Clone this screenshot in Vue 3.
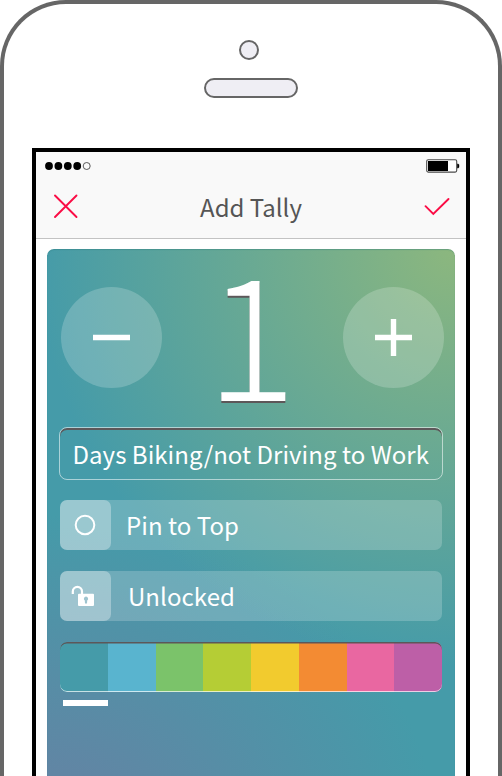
<script setup>
import { ref } from 'vue'

const count = ref(1)
const selected = ref(0)
const colors = ['#459ba9', '#59b4cf', '#7bc36a', '#b5cd35', '#f2cb2e', '#f38b33', '#e967a1', '#bd5fa7']
</script>

<template>
  <div class="phone">
    <div class="camera"></div>
    <div class="speaker"></div>
    <div class="screen">
      <header class="header">
        <div class="status">
          <svg class="signal" width="46" height="8" viewBox="0 0 46 8">
            <circle v-for="n in 4" :key="n" :cx="4 + (n - 1) * 9.4" cy="4" r="3.9" />
            <circle cx="41.7" cy="4" r="3.5" fill="none" stroke="#333" stroke-width=".8" />
          </svg>
          <svg class="battery" width="34" height="14" viewBox="0 0 34 14">
            <rect x=".7" y=".7" width="30" height="12.4" rx="1.5" fill="#fff" stroke="#4a4a4a" stroke-width="1.1" />
            <rect x="2" y="2" width="20" height="10" />
            <path d="M31.2 4.7h1l1 1v2.6l-1 1h-1z" />
          </svg>
        </div>
        <div class="navbar">
          <svg class="close" width="26" height="26" viewBox="0 0 26 26">
            <path d="M2 1.5 23.5 23M23.5 1.5 2 23" />
          </svg>
          <h1 class="title">Add Tally</h1>
          <svg class="check" width="26" height="20" viewBox="0 0 26 20">
            <path d="M1.5 9.2 9.3 17 24.5 2" />
          </svg>
        </div>
      </header>
      <main class="card">
        <div class="counter">
          <button class="round" @click="count--">
            <svg width="37" height="37" viewBox="0 0 37 37"><path d="M0 18.5h37" /></svg>
          </button>
          <div class="count">{{ count }}</div>
          <button class="round" @click="count++">
            <svg width="37" height="37" viewBox="0 0 37 37"><path d="M0 18.5h37M18.5 0v37" /></svg>
          </button>
        </div>
        <div class="field"><span>Days Biking/not Driving to Work</span></div>
        <div class="option pin">
          <div class="tile">
            <svg width="22" height="22" viewBox="0 0 22 22"><circle cx="11" cy="11" r="9.3" fill="none" stroke="#fff" stroke-width="2" /></svg>
          </div>
          <span>Pin to Top</span>
        </div>
        <div class="option lock">
          <div class="tile">
            <svg width="24" height="22" viewBox="0 0 24 22">
              <path d="M1.8 9V6.5a4.6 4.6 0 0 1 9.2 0V9.5" fill="none" stroke="#fff" stroke-width="2.2" />
              <path fill="#fff" fill-rule="evenodd" d="M8 8.7h14q1 0 1 1v10.2q0 1-1 1H8q-1 0-1-1V9.7q0-1 1-1zM15 11.600a2.200 2.200 0 0 0-1.200 4l.2 2.800h2l.2-2.800a2.200 2.200 0 0 0-1.200-4z" />
            </svg>
          </div>
          <span>Unlocked</span>
        </div>
        <div class="swatches">
          <div v-for="(c, i) in colors" :key="c" class="swatch" :style="{ background: c }" @click="selected = i"></div>
        </div>
        <div class="markers">
          <i v-for="(c, i) in colors" :key="c" :class="{ on: i === selected }"></i>
        </div>
      </main>
    </div>
  </div>
</template>

<style>
body {
  background: #fff;
  overflow: hidden;
}
</style>

<style scoped>
* {
  box-sizing: border-box;
}
.phone {
  height: 776px;
  border: 4px solid #666;
  border-bottom: 0;
  border-radius: 66px 66px 0 0;
  display: flex;
  flex-direction: column;
  align-items: center;
  overflow: hidden;
  font-family: "Noto Sans CJK SC", "Noto Sans", sans-serif;
}
.camera {
  flex: none;
  width: 20px;
  height: 20px;
  margin: 36px 0 0 -4px;
  border: 2px solid #666;
  border-radius: 50%;
  background: #efeef4;
}
.speaker {
  flex: none;
  width: 94px;
  height: 20px;
  margin-top: 18px;
  border: 2px solid #666;
  border-radius: 10px;
  background: #efeef4;
}
.screen {
  flex: 1;
  width: 438px;
  margin-top: 50px;
  border: 4px solid #000;
  border-bottom: 0;
  display: flex;
  flex-direction: column;
}
.header {
  height: 87px;
  background: #f9f9f9;
  border-bottom: 1px solid #c3c3c3;
}
.status {
  display: flex;
  justify-content: space-between;
  padding: 7px 6.5px 0 8.5px;
  height: 28px;
}
.signal {
  margin-top: 3px;
}
.navbar {
  display: flex;
  justify-content: space-between;
  align-items: center;
  height: 54px;
  padding: 0 16px 0 17px;
}
.navbar svg {
  fill: none;
  stroke: #fb0c45;
  stroke-width: 1.9;
  stroke-linecap: round;
}
.title {
  margin: 0 1px 0 0;
  font-weight: 400;
  font-size: 24px;
  line-height: 40px;
  color: #555;
}
.card {
  flex: 1;
  margin: 10px 11px 0;
  padding: 0 12px 0 13px;
  border-radius: 7px 7px 0 0;
  box-shadow: inset 0 1px 1px rgba(40, 120, 120, .35);
  background:
    radial-gradient(circle at 100% 0, #8cb77e 0, #8cb77e00 418px),
    radial-gradient(390px 325px at 0 112%, #6880a3 0, #6880a300 100%),
    #459ba9;
  color: #fff;
}
.counter {
  display: flex;
  justify-content: space-between;
  align-items: center;
  height: 176px;
  margin: 0 -1.5px 2px 1px;
}
.round {
  flex: none;
  width: 101px;
  height: 101px;
  padding: 0;
  border: 0;
  border-radius: 50%;
  background: rgba(255, 255, 255, .2);
  display: flex;
  align-items: center;
  justify-content: center;
}
.round svg {
  stroke: #fff;
  stroke-width: 5.4;
}
.count {
  font-weight: 200;
  font-size: 170px;
  line-height: 120px;
  margin: -20px 3px 0 0;
  text-shadow: 0 2px 0 #5d5759;
}
.field {
  height: 53px;
  margin: 0 0 0 -1px;
  border: 1.5px solid rgba(255, 255, 255, .55);
  border-radius: 8px;
  box-shadow: inset 0 2px 0 #5d5759;
  display: flex;
  align-items: center;
  padding: 0 0 1px 12.5px;
  font-size: 24px;
  letter-spacing: .04px;
  white-space: nowrap;
}
.option {
  display: flex;
  align-items: center;
  height: 50px;
  margin: 20px 1px 0 0;
  border-radius: 7px;
  background: rgba(255, 255, 255, .2);
  font-size: 24px;
  letter-spacing: .06px;
  white-space: nowrap;
}
.option.lock {
  margin-top: 21px;
}
.option span {
  margin-top: -1px;
}
.tile {
  width: 51px;
  height: 50px;
  border-radius: 7px;
  background: rgba(255, 255, 255, .32);
  display: flex;
  align-items: center;
  justify-content: center;
  margin-right: 15px;
}
.pin .tile {
  padding-right: 1px;
}
.lock .tile {
  margin-right: 17px;
  padding-right: 6px;
}
.swatches {
  position: relative;
  display: flex;
  height: 50px;
  margin: 21px 1px 0 0;
  border-radius: 7px;
  overflow: hidden;
}
.swatches::after {
  content: "";
  position: absolute;
  inset: 0;
  border-radius: 7px;
  box-shadow: inset 0 1.5px 0 #5d5759, inset 0 -1px 0 rgba(255, 255, 255, .7);
}
.swatch {
  flex: 1;
}
.markers {
  display: flex;
  margin: 8px 1px 0 0;
}
.markers i {
  flex: 1;
  height: 6px;
  margin-left: 3px;
}
.markers .on {
  background: #fff;
}
</style>
